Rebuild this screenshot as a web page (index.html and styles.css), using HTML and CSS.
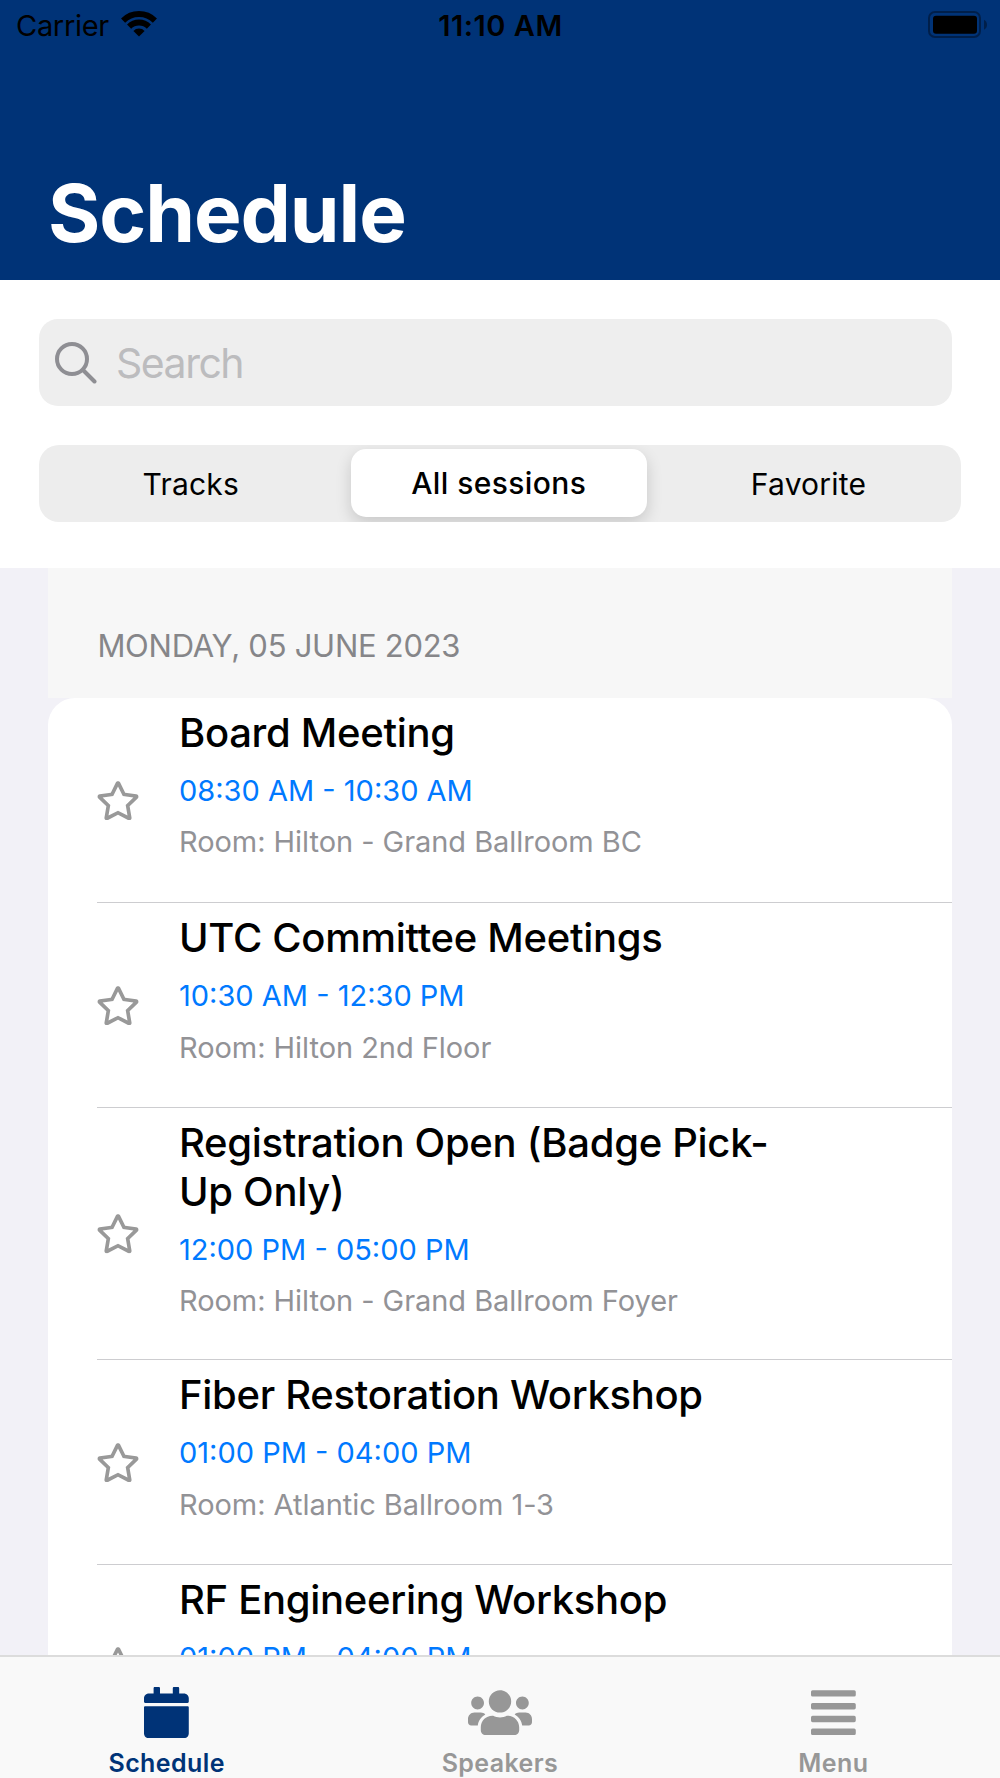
FILE: index.html
```html
<!DOCTYPE html>
<html>
<head>
<meta charset="UTF-8">
<title>Schedule</title>
<link rel="stylesheet" href="styles.css">
</head>
<body>
<svg class="defs" width="0" height="0">
	<symbol id="star" viewBox="0 0 576 512">
		<path d="M528.1 171.5L382 150.2 316.7 17.8c-11.7-23.6-45.6-23.9-57.4 0L194 150.2 47.9 171.5c-26.2 3.8-36.7 36.1-17.7 54.6l105.7 103-25 145.5c-4.5 26.3 23.2 46 46.4 33.7L288 439.6l130.7 68.7c23.2 12.2 50.9-7.4 46.4-33.7l-25-145.5 105.7-103c19-18.5 8.5-50.8-17.7-54.6zM388.6 312.3l23.7 138.4L288 385.4l-124.3 65.3 23.7-138.4-100.6-98 139-20.2 62.2-126 62.2 126 139 20.2-100.6 98z"/>
	</symbol>
</svg>
<div class="app">
	<div class="header">
		<div class="status">
			<div class="carrier">
				<span class="carrier-name">Carrier</span>
				<svg class="wifi" viewBox="0 0 36 26">
					<path d="M18 25.5l-5.6-5.6a8 8 0 0 1 11.2 0z"/>
					<path d="M8.1 15.6a14 14 0 0 1 19.8 0" class="arc"/>
					<path d="M2.1 9.6a22.5 22.5 0 0 1 31.8 0" class="arc"/>
				</svg>
			</div>
			<span class="clock">11:10 AM</span>
			<svg class="battery" viewBox="0 0 60 28">
				<rect x="1" y="1" width="51" height="25" rx="6" class="shell"/>
				<rect x="5" y="4.7" width="44" height="18" rx="3"/>
				<path d="M56 8.7q3 1.6 3 5t-3 5z" class="tip"/>
			</svg>
		</div>
		<h1>Schedule</h1>
	</div>

	<div class="tools">
		<div class="search">
			<svg class="search-icon" viewBox="0 0 42 42">
				<circle cx="17" cy="17" r="15"/>
				<path d="M28 28l11.5 11.5"/>
			</svg>
			<span class="search-text">Search</span>
		</div>
		<div class="segment">
			<div class="seg tracks">Tracks</div>
			<div class="seg selected">All sessions</div>
			<div class="seg favorite">Favorite</div>
		</div>
	</div>

	<div class="content">
		<div class="day">MONDAY, 05 JUNE 2023</div>
		<div class="list">
			<div class="item">
				<svg class="star"><use href="#star"/></svg>
				<div class="info">
					<h2>Board Meeting</h2>
					<p class="time">08:30 AM - 10:30 AM</p>
					<p class="room">Room: Hilton - Grand Ballroom BC</p>
				</div>
			</div>
			<div class="item">
				<svg class="star"><use href="#star"/></svg>
				<div class="info">
					<h2>UTC Committee Meetings</h2>
					<p class="time">10:30 AM - 12:30 PM</p>
					<p class="room">Room: Hilton 2nd Floor</p>
				</div>
			</div>
			<div class="item">
				<svg class="star"><use href="#star"/></svg>
				<div class="info">
					<h2>Registration Open (Badge Pick-<br>Up Only)</h2>
					<p class="time">12:00 PM - 05:00 PM</p>
					<p class="room">Room: Hilton - Grand Ballroom Foyer</p>
				</div>
			</div>
			<div class="item">
				<svg class="star"><use href="#star"/></svg>
				<div class="info">
					<h2>Fiber Restoration Workshop</h2>
					<p class="time">01:00 PM - 04:00 PM</p>
					<p class="room">Room: Atlantic Ballroom 1-3</p>
				</div>
			</div>
			<div class="item">
				<svg class="star"><use href="#star"/></svg>
				<div class="info">
					<h2>RF Engineering Workshop</h2>
					<p class="time">01:00 PM - 04:00 PM</p>
				</div>
			</div>
		</div>
	</div>

	<div class="tabs">
		<div class="tab active">
			<svg class="icon" viewBox="0 0 448 512"><path d="M12 192h424c6.6 0 12 5.4 12 12v260c0 26.5-21.5 48-48 48H48c-26.5 0-48-21.5-48-48V204c0-6.6 5.4-12 12-12zm436-44v-36c0-26.5-21.5-48-48-48h-48V12c0-6.6-5.4-12-12-12h-40c-6.6 0-12 5.4-12 12v52H160V12c0-6.6-5.4-12-12-12h-40c-6.6 0-12 5.4-12 12v52H48C21.5 64 0 85.5 0 112v36c0 6.6 5.4 12 12 12h424c6.6 0 12-5.4 12-12z"/></svg>
			<span>Schedule</span>
		</div>
		<div class="tab">
			<svg class="icon" viewBox="0 0 640 512"><path d="M96 224c35.3 0 64-28.7 64-64s-28.7-64-64-64-64 28.7-64 64 28.7 64 64 64zm448 0c35.3 0 64-28.7 64-64s-28.7-64-64-64-64 28.7-64 64 28.7 64 64 64zm32 32h-64c-17.6 0-33.5 7.1-45.1 18.6 40.3 22.1 68.9 62 75.1 109.4h66c17.7 0 32-14.3 32-32v-32c0-35.3-28.7-64-64-64zm-256 0c61.9 0 112-50.1 112-112S381.9 32 320 32 208 82.1 208 144s50.1 112 112 112zm76.8 32h-8.3c-20.8 10-43.9 16-68.5 16s-47.6-6-68.5-16h-8.3C179.6 288 128 339.6 128 403.2V432c0 26.5 21.5 48 48 48h288c26.5 0 48-21.5 48-48v-28.8c0-63.6-51.6-115.2-115.2-115.2zm-223.7-13.4C161.5 263.1 145.6 256 128 256H64c-35.3 0-64 28.7-64 64v32c0 17.7 14.3 32 32 32h65.9c6.3-47.4 34.9-87.3 75.2-109.4z"/></svg>
			<span>Speakers</span>
		</div>
		<div class="tab">
			<svg class="icon" viewBox="0 0 448 512"><path d="M16 32h416a16 16 0 0 1 16 16v32a16 16 0 0 1-16 16H16A16 16 0 0 1 0 80V48a16 16 0 0 1 16-16zm0 128h416a16 16 0 0 1 16 16v32a16 16 0 0 1-16 16H16a16 16 0 0 1-16-16v-32a16 16 0 0 1 16-16zm0 128h416a16 16 0 0 1 16 16v32a16 16 0 0 1-16 16H16a16 16 0 0 1-16-16v-32a16 16 0 0 1 16-16zm0 128h416a16 16 0 0 1 16 16v32a16 16 0 0 1-16 16H16a16 16 0 0 1-16-16v-32a16 16 0 0 1 16-16z"/></svg>
			<span>Menu</span>
		</div>
	</div>
</div>
</body>
</html>
```
FILE: styles.css
```css
*{
	box-sizing:border-box;
	margin:0;
	padding:0;
}
body{
	font-family:Inter, "Liberation Sans", sans-serif;
	color:#000;
	background-color:#fff;
}
svg{
	display:block;
	flex:none;
}
.defs{
	position:absolute;
}
.app{
	display:flex;
	flex-direction:column;
	width:1000px;
	height:1778px;
	overflow:hidden;
}

/* header */
.header{
	flex:none;
	height:280.4px;
	background-color:#003377;
}
.status{
	display:grid;
	grid-template-columns:1fr auto 1fr;
	align-items:center;
	height:50px;
	padding:1px 12px 0 16px;
	font-size:29px;
	line-height:36px;
}
.carrier{
	display:flex;
	gap:12px;
}
.carrier-name{
	letter-spacing:-0.3px;
}
.wifi{
	width:36px;
	height:26px;
	margin-top:3px;
}
.arc{
	fill:none;
	stroke:#000;
	stroke-width:5.8;
}
.clock{
	margin-right:3px;
	font-weight:600;
	letter-spacing:0.5px;
}
.battery{
	justify-self:end;
	width:60px;
	height:28px;
	margin-top:-2px;
}
.shell{
	fill:none;
	stroke:#001f4a;
	stroke-width:2;
}
.tip{
	fill:#001f4a;
}
h1{
	padding-left:48px;
	margin-top:115px;
	font-size:80px;
	line-height:96px;
	font-weight:700;
	color:#fff;
	letter-spacing:-1.1px;
}

/* search + segment */
.tools{
	flex:none;
	height:287.6px;
	padding:38.6px 39px 0;
}
.search{
	display:flex;
	align-items:center;
	width:913px;
	height:87px;
	padding:1px 0 0 16px;
	background-color:#eee;
	border-radius:19px;
}
.search-icon{
	width:42px;
	height:42px;
	fill:none;
	stroke:#8e8e93;
	stroke-width:4;
	stroke-linecap:round;
}
.search-text{
	margin:1px 0 0 19px;
	font-size:41px;
	letter-spacing:-1.5px;
	color:#bcbcbe;
}
.segment{
	display:grid;
	grid-template-columns:311.5px 296.5px 314px;
	height:77px;
	margin-top:39px;
	background-color:#ededed;
	border-radius:20px;
	overflow:hidden;
	font-size:30px;
	letter-spacing:0.2px;
}
.seg{
	display:flex;
	align-items:center;
	justify-content:center;
	padding-top:1px;
}
.tracks{
	padding-right:8px;
}
.favorite{
	padding-left:9px;
}
.selected{
	margin:4px 0 5px;
	background-color:#fff;
	border-radius:15px;
	box-shadow:0 6px 16px rgba(0,0,0,.16);
	font-weight:500;
	letter-spacing:0.4px;
}

/* session list */
.content{
	flex:1;
	min-height:0;
	overflow:hidden;
	padding:0 48.4px;
	background-color:#f2f1f7;
}
.day{
	height:130px;
	padding:58px 49px 0;
	background-color:#f7f7f7;
	font-size:31px;
	line-height:40px;
	letter-spacing:-0.27px;
	color:#868689;
}
.list{
	background-color:#fff;
	border-radius:27px 27px 0 0;
}
.item{
	display:flex;
	align-items:center;
	min-height:204.5px;
	margin-left:48.6px;
}
.item + .item{
	border-top:1px solid #cdcdd0;
}
.star{
	width:44px;
	height:39.5px;
	margin:1px 0 0 -0.5px;
	fill:#999;
}
.info{
	align-self:flex-start;
	margin-left:38.5px;
	padding:10px 0 38px;
}
h2{
	font-size:40px;
	line-height:49px;
	font-weight:500;
	letter-spacing:-0.3px;
}
.time,
.room{
	font-size:29px;
	line-height:40px;
}
.time{
	margin-top:14px;
	color:#0079ff;
}
.room{
	margin-top:11.5px;
	color:#929296;
	letter-spacing:-0.05px;
}

/* tab bar */
.tabs{
	display:grid;
	grid-template-columns:repeat(3, 1fr);
	flex:none;
	height:123px;
	background-color:#f9f9f9;
	border-top:2px solid #dcdcdc;
	color:#979797;
}
.tab{
	display:flex;
	flex-direction:column;
	align-items:center;
	padding-top:30px;
	font-size:25px;
	line-height:30px;
	font-weight:600;
	letter-spacing:0.4px;
}
.active{
	color:#003377;
}
.icon{
	height:51.2px;
	margin-bottom:9.5px;
	fill:currentColor;
}
```
